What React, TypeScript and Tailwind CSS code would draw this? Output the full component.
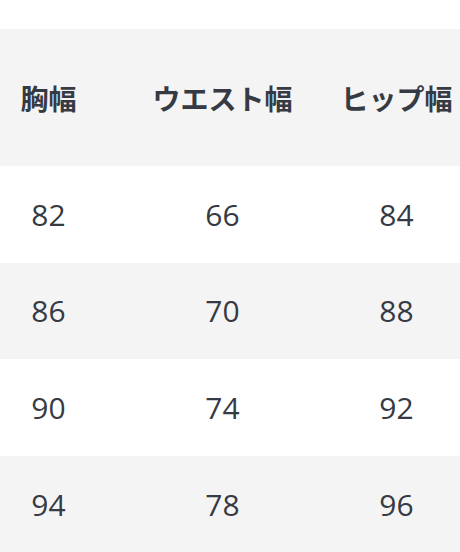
const headers = ["胸幅", "ウエスト幅", "ヒップ幅"]

const rows = [
	{ values: ["82", "66", "84"], height: "h-[97px]", bg: "bg-white" },
	{ values: ["86", "70", "88"], height: "h-[96px]", bg: "bg-[#f4f4f5]" },
	{ values: ["90", "74", "92"], height: "h-[97px]", bg: "bg-white" },
	{ values: ["94", "78", "96"], height: "h-[97px]", bg: "bg-[#f4f4f5]" },
]

// column centers sit at ~48, ~222, ~396
const grid = "grid grid-cols-[97px_251px_97px]"

export default function App() {
	return (
		<div
			className="h-[552px] w-[460px] overflow-hidden bg-white pt-[29px] text-[#363a43]"
			style={{ fontFamily: '"Open Sans", "Noto Sans CJK JP", sans-serif' }}
		>
			<div className={`${grid} h-[137px] items-center bg-[#f4f4f5]`}>
				{headers.map((label) => (
					<div key={label} className="flex justify-center">
						<span
							className="shrink-0 text-[28px] leading-none font-bold whitespace-nowrap"
							style={{ fontFamily: '"Noto Sans CJK JP", sans-serif' }}
						>
							{label}
						</span>
					</div>
				))}
			</div>

			{rows.map((row) => (
				<div
					key={row.values.join("-")}
					className={`${grid} ${row.height} ${row.bg} items-center`}
				>
					{row.values.map((value, i) => (
						<div key={i} className="text-center text-[30px] leading-none">
							{value}
						</div>
					))}
				</div>
			))}
		</div>
	)
}
